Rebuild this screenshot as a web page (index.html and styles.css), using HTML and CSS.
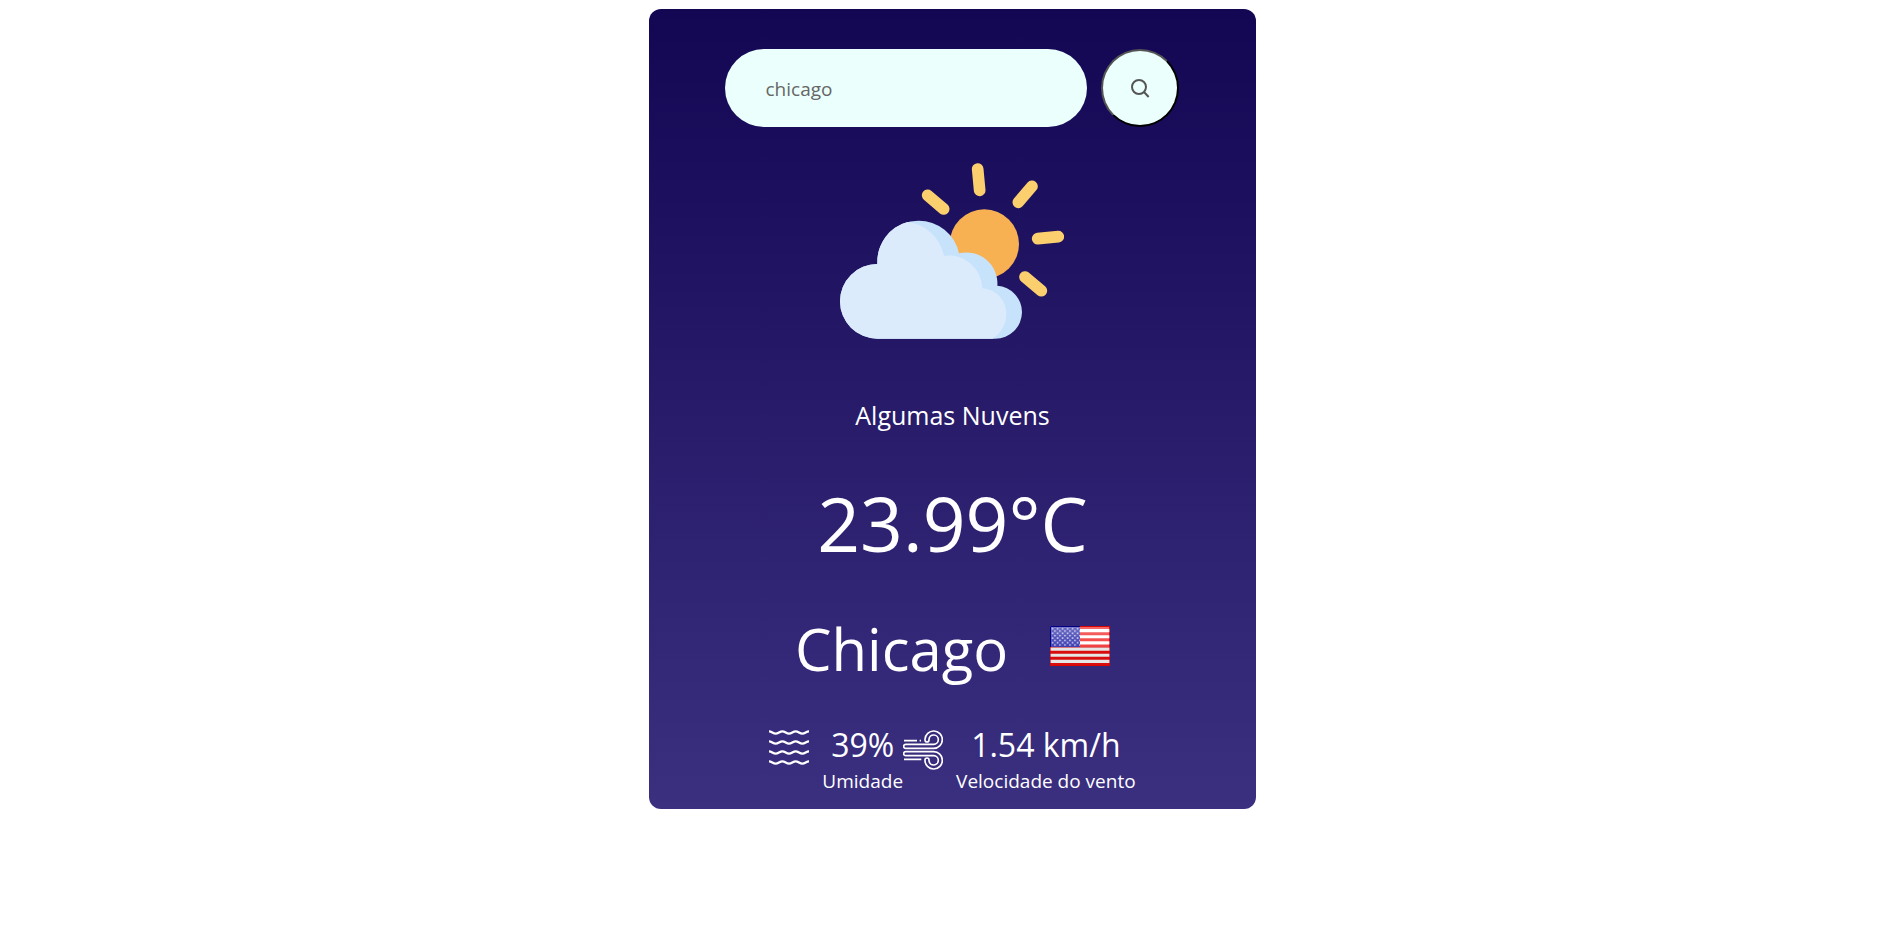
FILE: index.html
```html
<!DOCTYPE html>
<html lang="pt-BR">
<head>
<meta charset="utf-8">
<meta name="viewport" content="width=device-width, initial-scale=1">
<title>Clima</title>
<link rel="stylesheet" href="styles.css">
</head>
<body>
<main class="card">
  <form class="search">
    <input class="search-input" type="text" aria-label="Cidade" value="chicago">
    <button class="search-button" type="button" aria-label="Buscar">
      <svg class="search-icon" viewBox="0 0 60 60" fill="none" stroke="#555" stroke-width="6">
        <circle cx="27" cy="27" r="21"/>
        <path d="M42 42L56 57"/>
      </svg>
    </button>
  </form>

  <svg class="weather-icon" viewBox="60 39 672 528" role="img" aria-label="Algumas nuvens">
    <circle cx="493" cy="282" r="104" fill="#f7b153"/>
    <path d="M473 57L479 121M636 109L595 157M323 136L371 177M653 266L715 260M615 381L664 422" stroke="#fbcf6e" stroke-width="35" stroke-linecap="round"/>
    <path d="M172 566A112 112 0 0 1 172 342V335A123 123 0 0 1 295 212A123 123 0 0 1 417 310A93 93 0 0 1 532 407A80 80 0 0 1 606 487A80 80 0 0 1 526 566Z" fill="#c7e3fb"/>
    <path d="M172 566A112 112 0 0 1 172 342V335A123 123 0 0 1 262 216A127 127 0 0 1 372 318A100 100 0 0 1 487 415A76 76 0 0 1 559 490A90 90 0 0 1 518 566Z" fill="#dbebfc"/>
  </svg>

  <p class="description">Algumas Nuvens</p>
  <p class="temperature">23.99°C</p>

  <div class="place">
    <h1 class="city">Chicago</h1>
    <svg class="flag" viewBox="0 0 180 120" role="img" aria-label="Estados Unidos">
      <defs>
        <pattern id="stars" width="15" height="14" patternUnits="userSpaceOnUse" x="4" y="5">
          <circle cx="4" cy="3" r="2.400" fill="#fff"/>
          <circle cx="11" cy="10" r="2.400" fill="#fff"/>
        </pattern>
        <linearGradient id="gloss" x2="0" y2="1">
          <stop offset="0" stop-color="#fff" stop-opacity=".38"/>
          <stop offset=".52" stop-color="#fff" stop-opacity=".2"/>
          <stop offset=".53" stop-color="#000" stop-opacity=".1"/>
          <stop offset="1" stop-color="#000" stop-opacity=".1"/>
        </linearGradient>
      </defs>
      <rect width="180" height="120" fill="#fff"/>
      <path d="M0 4.500H180M0 23H180M0 41.500H180M0 60H180M0 78.500H180M0 97H180M0 115.500H180" stroke="#f00f0f" stroke-width="9.200"/>
      <rect width="90" height="63" fill="#1010a0"/>
      <rect x="3" y="3" width="174" height="114" fill="url(#gloss)"/>
      <rect width="90" height="60" fill="url(#stars)"/>
      <path d="M90 1.500H178.500V118.500H1.500V63" fill="none" stroke="#c00" stroke-opacity=".65" stroke-width="3"/>
      <path d="M90 1.500H1.500V63" fill="none" stroke="#000080" stroke-width="3"/>
    </svg>
  </div>

  <div class="details">
    <div class="detail">
      <svg class="detail-icon" viewBox="0 0 120 120" fill="none" stroke="#fff" stroke-width="7" aria-hidden="true">
        <path d="M0 4C8 4 12 11 20 11S32 4 40 4S52 11 60 11S72 4 80 4S92 11 100 11S112 4 120 4"/>
        <path d="M0 34C8 34 12 41 20 41S32 34 40 34S52 41 60 41S72 34 80 34S92 41 100 41S112 34 120 34"/>
        <path d="M0 64C8 64 12 71 20 71S32 64 40 64S52 71 60 71S72 64 80 64S92 71 100 71S112 64 120 64"/>
        <path d="M0 94C8 94 12 101 20 101S32 94 40 94S52 101 60 101S72 94 80 94S92 101 100 101S112 94 120 94"/>
      </svg>
      <div class="reading">
        <p class="value">39%</p>
        <p class="label">Umidade</p>
      </div>
    </div>
    <div class="detail">
      <svg class="detail-icon" viewBox="0 0 120 120" fill="none" stroke="#fff" stroke-width="5" aria-hidden="true">
        <path d="M8 55H92A26 26 0 1 0 66 28V30A6 6 0 0 0 78 30V28A14 14 0 1 1 92 43H8A6 6 0 0 0 8 55Z"/>
        <path d="M8 65H92A26 26 0 1 1 66 92V90A6 6 0 0 1 78 90V92A14 14 0 1 0 92 77H8A6 6 0 0 1 8 65Z"/>
        <path d="M3 32H42M50 32H54M3 88H55"/>
      </svg>
      <div class="reading">
        <p class="value">1.54 km/h</p>
        <p class="label">Velocidade do vento</p>
      </div>
    </div>
  </div>
</main>
</body>
</html>
```
FILE: styles.css
```css
* {
  box-sizing: border-box;
  margin: 0;
  padding: 0;
}

body {
  padding: 9px 0 9px 6px;
  background: #fff;
  font-family: "Segoe UI", "Open Sans", "Noto Sans", sans-serif;
}

.card {
  display: flex;
  flex-direction: column;
  align-items: center;
  width: 32vw;
  min-width: 480px;
  margin: 0 auto;
  padding: 40px 16px 14px;
  border-radius: 12px;
  background: linear-gradient(180deg, #130754, #3b2f80);
  color: #fff;
}

.search {
  display: flex;
  justify-content: center;
  gap: 14px;
  width: 100%;
}

.search-input {
  width: 63%;
  max-width: 362px;
  min-width: 0;
  height: 78px;
  padding: 2px 40px 0;
  border: 0;
  border-radius: 40px;
  outline: 0;
  background: #ebfffc;
  color: #666;
  font: inherit;
  font-size: 19px;
}

.search-button {
  display: flex;
  align-items: center;
  justify-content: center;
  width: 78px;
  height: 78px;
  border: 2px outset #000;
  border-radius: 50%;
  background: #ebfffc;
}

.search-icon {
  width: 20px;
  height: 20px;
}

.weather-icon {
  width: 224px;
  height: 176px;
  margin: 36px 0 58px;
}

.description {
  font-size: 25px;
  line-height: 36px;
}

.temperature {
  margin-top: 36px;
  font-size: 75px;
  line-height: 108px;
}

.place {
  display: flex;
  align-items: center;
  gap: 42px;
  margin-top: 32px;
}

.city {
  font-size: 58px;
  font-weight: 400;
  line-height: 80px;
}

.flag {
  width: 60px;
  height: 40px;
  margin-bottom: 6px;
}

.details {
  display: flex;
  margin-top: 33px;
}

.detail {
  display: flex;
}

.detail-icon {
  width: 40px;
  height: 40px;
  margin: 8px 13px 0 0;
}

.reading {
  text-align: center;
}

.value {
  font-size: 32px;
  line-height: 45px;
}

.label {
  font-size: 19px;
  line-height: 28px;
}
```
